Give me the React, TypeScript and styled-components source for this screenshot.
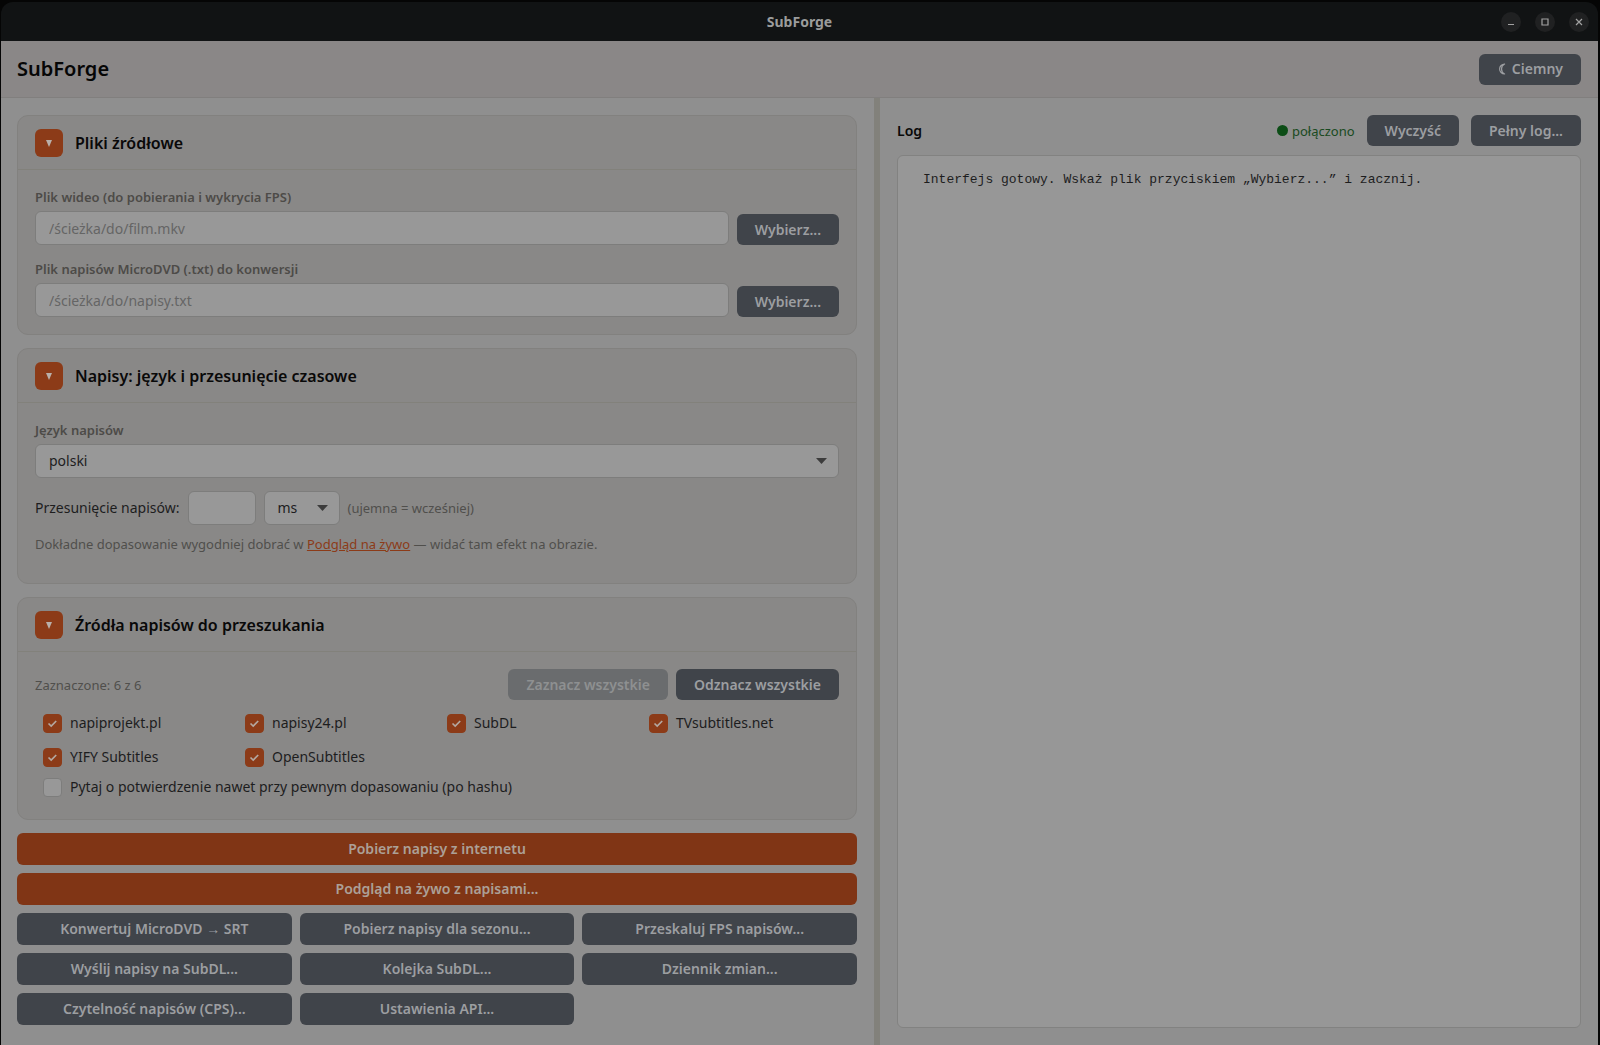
import React, { useState } from 'react';
import styled, { createGlobalStyle, css } from 'styled-components';

const GlobalStyle = createGlobalStyle`
  *, *::before, *::after { box-sizing: border-box; }
  body { margin: 0; background: #050505; }
  body, button, input, select {
    font-family: 'Noto Sans', 'Open Sans', sans-serif;
    font-size: 14px;
    line-height: 20px;
    color: #1d1d1e;
  }
`;

const Window = styled.div`
  display: flex;
  flex-direction: column;
  min-height: 100vh;
  padding: 2px 2px 0 1px;
`;

const TitleBar = styled.header`
  display: grid;
  grid-template-columns: 1fr auto 1fr;
  align-items: center;
  height: 39px;
  padding: 0 9px;
  border-radius: 12px 12px 0 0;
  background: #111314;
`;

const WindowTitle = styled.span`
  grid-column: 2;
  font-weight: 700;
  color: #9b9c9c;
`;

const WindowControls = styled.div`
  display: flex;
  justify-content: flex-end;
  gap: 14px;
`;

const WindowButton = styled.button`
  display: grid;
  place-items: center;
  width: 20px;
  height: 20px;
  padding: 0;
  border: 0;
  border-radius: 50%;
  background: #202122;
  color: #a2a2a2;
`;

const AppHeader = styled.div`
  display: flex;
  align-items: center;
  justify-content: space-between;
  height: 57px;
  padding: 0 17px 0 16px;
  border-bottom: 1px solid #817f7e;
  background: #8a8787;
`;

const Brand = styled.h1`
  margin: 0;
  font-size: 20px;
  line-height: 28px;
  font-weight: 600;
  color: #060606;
`;

const Button = styled.button<{ $primary?: boolean }>`
  display: inline-flex;
  align-items: center;
  justify-content: center;
  gap: 6px;
  height: 31px;
  padding: 0 18px;
  border: 0;
  border-radius: 6px;
  background: ${(p) => (p.$primary ? '#803515' : '#40444a')};
  color: ${(p) => (p.$primary ? '#aca097' : '#9c9ea1')};
  font-weight: 600;
  white-space: nowrap;
  &:disabled { background: #6a6c6e; color: #8e9091; }
`;

const Panes = styled.main`
  flex: 1;
  display: grid;
  grid-template-columns: 873fr 6px 718fr;
  background: #8f8f8f;
`;

const Divider = styled.div`
  background: #82817b;
`;

const LeftPane = styled.div`
  display: flex;
  flex-direction: column;
  gap: 13px;
  min-width: 0;
  padding: 17px 17px 17px 16px;
`;

const Card = styled.section`
  border: 1px solid #82817f;
  border-radius: 11px;
  background: #898887;
`;

const CardHeader = styled.div`
  display: flex;
  align-items: center;
  gap: 12px;
  height: 54px;
  padding: 0 17px;
  border-bottom: 1px solid #82817b;
`;

const Toggle = styled.button`
  display: grid;
  place-items: center;
  width: 28px;
  height: 28px;
  padding: 0;
  border: 0;
  border-radius: 6px;
  background: #8c3b18;
  color: #b9b0aa;
`;

const CardTitle = styled.h2`
  margin: 0;
  font-size: 16px;
  line-height: 24px;
  font-weight: 600;
  color: #090909;
`;

const CardBody = styled.div`
  display: flex;
  flex-direction: column;
  padding: 17px;
`;

const Fields = styled.div`
  display: flex;
  flex-direction: column;
  gap: 14px;
`;

const FieldRow = styled.div`
  display: flex;
  align-items: flex-end;
  gap: 8px;
`;

const Field = styled.div`
  display: flex;
  flex: 1;
  flex-direction: column;
  gap: 4px;
  min-width: 0;
`;

const FieldLabel = styled.label`
  font-size: 13px;
  line-height: 20px;
  font-weight: 600;
  color: #4d4b48;
`;

const control = css`
  height: 34px;
  padding: 0 13px;
  border: 1px solid #7d7d7c;
  border-radius: 6px;
  background: #989898;
  color: #1d1d1e;
`;

const TextInput = styled.input<{ $short?: boolean }>`
  ${control}
  width: ${(p) => (p.$short ? '68px' : '100%')};
  &::placeholder { color: #656565; opacity: 1; }
`;

const SelectWrap = styled.div<{ $short?: boolean }>`
  display: grid;
  align-items: center;
  width: ${(p) => (p.$short ? '76px' : '100%')};
  & > * { grid-area: 1 / 1; }
  & > svg { justify-self: end; margin-right: 12px; pointer-events: none; }
`;

const Select = styled.select`
  ${control}
  width: 100%;
  appearance: none;
`;

const OffsetRow = styled.div`
  display: flex;
  align-items: center;
  gap: 8px;
  margin-top: 13px;
`;

const Hint = styled.span`
  font-size: 13px;
  color: #504f4c;
`;

const Note = styled.p`
  margin: 9px 0 12px;
  font-size: 13px;
  color: #504f4c;
`;

const Link = styled.a`
  color: #8c3b18;
`;

const SourcesBar = styled.div`
  display: flex;
  align-items: center;
  gap: 8px;
`;

const Count = styled(Hint)`
  flex: 1;
`;

const SourceGrid = styled.div`
  display: grid;
  grid-template-columns: repeat(4, 1fr);
  gap: 4px;
  margin-top: 8px;
`;

const CheckLabel = styled.label`
  display: flex;
  align-items: center;
  gap: 8px;
  height: 30px;
  padding-left: 8px;
`;

const CheckBox = styled.span`
  display: grid;
  flex: none;
  & > * { grid-area: 1 / 1; }
  & > svg { pointer-events: none; }
`;

const CheckInput = styled.input`
  appearance: none;
  width: 19px;
  height: 19px;
  margin: 0;
  border: 1px solid #7d7d7c;
  border-radius: 4px;
  background: #989898;
  &:checked { border-color: #8c3b18; background: #8c3b18; }
`;

const Actions = styled.div`
  display: grid;
  grid-template-columns: repeat(3, 1fr);
  gap: 8px;
  & > button { height: 32px; }
`;

const WideButton = styled(Button)`
  grid-column: 1 / -1;
`;

const LogPane = styled.section`
  display: flex;
  flex-direction: column;
  gap: 9px;
  min-width: 0;
  padding: 17px;
`;

const LogBar = styled.div`
  display: flex;
  align-items: center;
  gap: 12px;
`;

const LogTitle = styled.h2`
  flex: 1;
  margin: 0;
  font-size: 14px;
  line-height: 20px;
  font-weight: 600;
  color: #090909;
`;

const Status = styled.span`
  display: flex;
  align-items: center;
  gap: 4px;
  font-size: 13px;
  color: #194a21;
`;

const Dot = styled.span`
  width: 11px;
  height: 11px;
  border-radius: 50%;
  background: #0c4d16;
`;

const LogOutput = styled.pre`
  flex: 1;
  margin: 0;
  padding: 14px 25px;
  border: 1px solid #828281;
  border-radius: 6px;
  background: #979797;
  font-family: 'Liberation Mono', monospace;
  font-size: 13px;
  line-height: 20px;
  color: #1d1d1e;
  white-space: pre-wrap;
`;

const CaretIcon = () => (
  <svg width="11" height="6" viewBox="0 0 11 6" fill="#3c3c3c" aria-hidden="true">
    <path d="M0 0h11L5.5 6z" />
  </svg>
);

const MoonIcon = () => (
  <svg width="9" height="12" viewBox="0 0 9 12" fill="none" stroke="currentColor" strokeWidth="1.2" strokeLinejoin="round" aria-hidden="true">
    <path d="M7.6 1A5 5 0 1 0 7.6 11A5.6 5.6 0 0 1 7.6 1z" />
  </svg>
);

function Section({ title, children }: { title: string; children: React.ReactNode }) {
  const [open, setOpen] = useState(true);
  return (
    <Card>
      <CardHeader>
        <Toggle aria-label={title} aria-expanded={open} onClick={() => setOpen(!open)}>
          <svg width="8" height="10" viewBox="0 0 8 10" fill="currentColor" aria-hidden="true">
            <path d="M1 2h6L4 9z" />
          </svg>
        </Toggle>
        <CardTitle>{title}</CardTitle>
      </CardHeader>
      {open && <CardBody>{children}</CardBody>}
    </Card>
  );
}

function FileField({ id, label, placeholder }: { id: string; label: string; placeholder: string }) {
  return (
    <FieldRow>
      <Field>
        <FieldLabel htmlFor={id}>{label}</FieldLabel>
        <TextInput id={id} type="text" placeholder={placeholder} />
      </Field>
      <Button>Wybierz...</Button>
    </FieldRow>
  );
}

function Check({ label, checked, onChange }: { label: string; checked: boolean; onChange: () => void }) {
  return (
    <CheckLabel>
      <CheckBox>
        <CheckInput type="checkbox" checked={checked} onChange={onChange} />
        {checked && (
          <svg width="19" height="19" viewBox="0 0 19 19" fill="none" stroke="#b3a8a1" strokeWidth="1.7" aria-hidden="true">
            <path d="M5.5 9.5l2.7 2.5 5-5" />
          </svg>
        )}
      </CheckBox>
      {label}
    </CheckLabel>
  );
}

const SOURCES = ['napiprojekt.pl', 'napisy24.pl', 'SubDL', 'TVsubtitles.net', 'YIFY Subtitles', 'OpenSubtitles'];

const PRIMARY_ACTIONS = ['Pobierz napisy z internetu', 'Podgląd na żywo z napisami...'];

const ACTIONS = [
  'Konwertuj MicroDVD → SRT',
  'Pobierz napisy dla sezonu...',
  'Przeskaluj FPS napisów...',
  'Wyślij napisy na SubDL...',
  'Kolejka SubDL...',
  'Dziennik zmian...',
  'Czytelność napisów (CPS)...',
  'Ustawienia API...',
];

export default function App() {
  const [selected, setSelected] = useState<string[]>(SOURCES);
  const [confirmAll, setConfirmAll] = useState(false);
  const [log, setLog] = useState('Interfejs gotowy. Wskaż plik przyciskiem „Wybierz...” i zacznij.');

  const toggle = (name: string) =>
    setSelected((now) => (now.includes(name) ? now.filter((n) => n !== name) : [...now, name]));

  return (
    <Window>
      <GlobalStyle />
      <TitleBar>
        <WindowTitle>SubForge</WindowTitle>
        <WindowControls>
          <WindowButton aria-label="Minimalizuj">
            <svg width="8" height="8" viewBox="0 0 8 8" stroke="currentColor"><path d="M1 6.5h6" /></svg>
          </WindowButton>
          <WindowButton aria-label="Maksymalizuj">
            <svg width="8" height="8" viewBox="0 0 8 8" fill="none" stroke="currentColor" strokeWidth="1.2"><path d="M1 1h6v6H1z" /></svg>
          </WindowButton>
          <WindowButton aria-label="Zamknij">
            <svg width="8" height="8" viewBox="0 0 8 8" stroke="currentColor" strokeWidth="1.2"><path d="M1 1l6 6M7 1L1 7" /></svg>
          </WindowButton>
        </WindowControls>
      </TitleBar>

      <AppHeader>
        <Brand>SubForge</Brand>
        <Button><MoonIcon />Ciemny</Button>
      </AppHeader>

      <Panes>
        <LeftPane>
          <Section title="Pliki źródłowe">
            <Fields>
              <FileField id="video" label="Plik wideo (do pobierania i wykrycia FPS)" placeholder="/ścieżka/do/film.mkv" />
              <FileField id="subs" label="Plik napisów MicroDVD (.txt) do konwersji" placeholder="/ścieżka/do/napisy.txt" />
            </Fields>
          </Section>

          <Section title="Napisy: język i przesunięcie czasowe">
            <Field>
              <FieldLabel htmlFor="language">Język napisów</FieldLabel>
              <SelectWrap>
                <Select id="language"><option>polski</option></Select>
                <CaretIcon />
              </SelectWrap>
            </Field>
            <OffsetRow>
              <label htmlFor="offset">Przesunięcie napisów:</label>
              <TextInput id="offset" type="text" $short />
              <SelectWrap $short>
                <Select aria-label="Jednostka"><option>ms</option></Select>
                <CaretIcon />
              </SelectWrap>
              <Hint>(ujemna = wcześniej)</Hint>
            </OffsetRow>
            <Note>
              Dokładne dopasowanie wygodniej dobrać w <Link href="#preview">Podgląd na żywo</Link> — widać tam efekt na obrazie.
            </Note>
          </Section>

          <Section title="Źródła napisów do przeszukania">
            <SourcesBar>
              <Count>Zaznaczone: {selected.length} z {SOURCES.length}</Count>
              <Button disabled={selected.length === SOURCES.length} onClick={() => setSelected(SOURCES)}>Zaznacz wszystkie</Button>
              <Button onClick={() => setSelected([])}>Odznacz wszystkie</Button>
            </SourcesBar>
            <SourceGrid>
              {SOURCES.map((name) => (
                <Check key={name} label={name} checked={selected.includes(name)} onChange={() => toggle(name)} />
              ))}
            </SourceGrid>
            <Check
              label="Pytaj o potwierdzenie nawet przy pewnym dopasowaniu (po hashu)"
              checked={confirmAll}
              onChange={() => setConfirmAll(!confirmAll)}
            />
          </Section>

          <Actions>
            {PRIMARY_ACTIONS.map((label) => <WideButton key={label} $primary>{label}</WideButton>)}
            {ACTIONS.map((label) => <Button key={label}>{label}</Button>)}
          </Actions>
        </LeftPane>

        <Divider />

        <LogPane>
          <LogBar>
            <LogTitle>Log</LogTitle>
            <Status><Dot />połączono</Status>
            <Button onClick={() => setLog('')}>Wyczyść</Button>
            <Button>Pełny log...</Button>
          </LogBar>
          <LogOutput>{log}</LogOutput>
        </LogPane>
      </Panes>
    </Window>
  );
}
